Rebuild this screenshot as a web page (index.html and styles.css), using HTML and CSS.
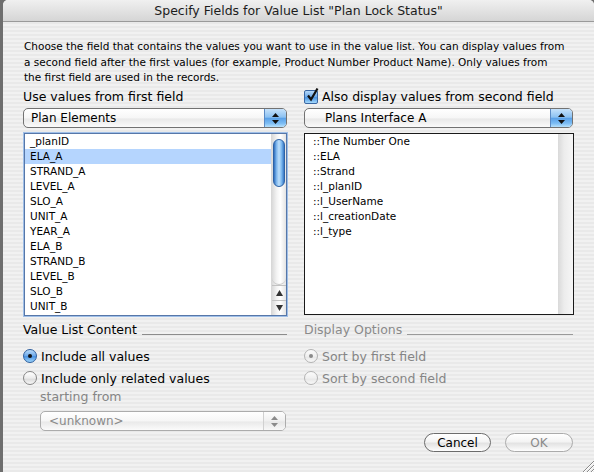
FILE: index.html
```html
<!DOCTYPE html>
<html lang="en">
<head>
    <meta charset="UTF-8">
    <title>Specify Fields for Value List</title>
    <link rel="stylesheet" href="styles.css">
</head>
<body>
<div class="window">
    <div class="titlebar">Specify Fields for Value List "Plan Lock Status"</div>
    <div class="content">
        <p class="intro">Choose the field that contains the values you want to use in the value list. You can display values from<br>a second field after the first values (for example, Product Number Product Name). Only values from<br>the first field are used in the records.</p>

        <div class="columns top">
            <div class="col">
                <div class="label">Use values from first field</div>
                <div class="popup">
                    <span class="popup-text">Plan Elements</span>
                    <span class="popup-arrows"><svg width="7" height="11" viewBox="0 0 7 11"><path d="M3.5 0 L7 4 L0 4 Z M0 7 L7 7 L3.5 11 Z" fill="#111"/></svg></span>
                </div>
                <div class="list focused">
                    <ul class="items">
                        <li>_planID</li>
                        <li class="selected">ELA_A</li>
                        <li>STRAND_A</li>
                        <li>LEVEL_A</li>
                        <li>SLO_A</li>
                        <li>UNIT_A</li>
                        <li>YEAR_A</li>
                        <li>ELA_B</li>
                        <li>STRAND_B</li>
                        <li>LEVEL_B</li>
                        <li>SLO_B</li>
                        <li>UNIT_B</li>
                    </ul>
                    <div class="scrollbar">
                        <div class="track"><div class="thumb"></div></div>
                        <div class="arrow"><svg width="7" height="6" viewBox="0 0 7 6"><path d="M3.5 0 L7 6 L0 6 Z" fill="#333"/></svg></div>
                        <div class="arrow"><svg width="7" height="6" viewBox="0 0 7 6"><path d="M0 0 L7 0 L3.5 6 Z" fill="#333"/></svg></div>
                    </div>
                </div>
            </div>
            <div class="col">
                <div class="label check-label">
                    <span class="checkbox"><svg width="14" height="16" viewBox="0 0 14 16"><path d="M3 8.5 L6 12.5 L12.5 1.5" fill="none" stroke="#111" stroke-width="2.2"/></svg></span>
                    Also display values from second field
                </div>
                <div class="popup">
                    <span class="popup-text indented">Plans Interface A</span>
                    <span class="popup-arrows"><svg width="7" height="11" viewBox="0 0 7 11"><path d="M3.5 0 L7 4 L0 4 Z M0 7 L7 7 L3.5 11 Z" fill="#111"/></svg></span>
                </div>
                <div class="list plain">
                    <ul class="items">
                        <li>::The Number One</li>
                        <li>::ELA</li>
                        <li>::Strand</li>
                        <li>::l_planID</li>
                        <li>::l_UserName</li>
                        <li>::l_creationDate</li>
                        <li>::l_type</li>
                    </ul>
                    <div class="scrollbar empty"></div>
                </div>
            </div>
        </div>

        <div class="columns bottom">
            <div class="col">
                <div class="group-title">Value List Content</div>
                <div class="radio-row"><span class="radio on"></span>Include all values</div>
                <div class="radio-row"><span class="radio"></span>Include only related values</div>
                <div class="sub-label">starting from</div>
                <div class="popup disabled">
                    <span class="popup-text">&lt;unknown&gt;</span>
                    <span class="popup-arrows"><svg width="7" height="11" viewBox="0 0 7 11"><path d="M3.5 0 L7 4 L0 4 Z M0 7 L7 7 L3.5 11 Z" fill="#8a8a8a"/></svg></span>
                </div>
            </div>
            <div class="col">
                <div class="group-title disabled">Display Options</div>
                <div class="radio-row disabled"><span class="radio on"></span>Sort by first field</div>
                <div class="radio-row disabled"><span class="radio"></span>Sort by second field</div>
            </div>
        </div>

        <div class="buttons">
            <button class="button">Cancel</button>
            <button class="button ok" disabled>OK</button>
        </div>
    </div>
    <svg class="grip" width="16" height="14" viewBox="0 0 16 14">
        <path d="M16 3 L5 14 M16 7 L9 14 M16 11 L13 14" stroke="#8a8a8a" stroke-width="1"/>
        <path d="M16 4 L6 14 M16 8 L10 14 M16 12 L14 14" stroke="#fff" stroke-width="1"/>
    </svg>
</div>
</body>
</html>
```

FILE: styles.css
```css
* { box-sizing: border-box; }
body { margin: 0; background: #6e6e6e; font-family: "DejaVu Sans", Verdana, sans-serif; color: #000; }

.window { position: relative; margin-left: 3px; height: 472px; overflow: hidden; border-radius: 5px 5px 0 0; background: repeating-linear-gradient(#f1f1f1 0 2px, #e9e9e9 2px 4px); }
.titlebar { height: 22px; line-height: 21px; text-align: center; font-size: 12.5px; color: #1c1c1c; background: linear-gradient(#f0f0f0, #d5d5d5); border-bottom: 1px solid #9a9a9a; }

.content { padding: 17px 20px 0 20px; }
.intro { margin: 0 0 0 1px; font-size: 10.5px; line-height: 15.5px; white-space: nowrap; }

.columns { display: grid; grid-template-columns: 265px 1fr; column-gap: 16px; }
.columns.top { margin-top: 3.5px; }
.columns.bottom { margin-top: 6px; }
.col { display: flex; flex-direction: column; }

.label { height: 16px; line-height: 16px; font-size: 12.5px; }
.check-label { display: flex; align-items: center; gap: 4px; }
.checkbox { width: 14px; height: 14px; position: relative; border: 1px solid #3a67a3; border-radius: 2px; background: linear-gradient(#b5d8f8, #6aa8ea 50%, #4b94e2 55%, #a6dafc); }
.checkbox svg { position: absolute; left: 0; top: -4px; }

/* popup menus */
.popup { display: flex; height: 20px; margin: 3px 1px 0 0; border: 1px solid #727272; border-radius: 5px; overflow: hidden; font-size: 12px; background: linear-gradient(#ffffff, #f6f6f6 50%, #e9e9e9 55%, #fbfbfb); }
.popup-text { flex: 1; padding-left: 7px; line-height: 18px; }
.popup-text.indented { padding-left: 20px; }
.popup-arrows { width: 22px; display: flex; align-items: center; justify-content: center; border-left: 1px solid #5b8ac4; background: linear-gradient(#c6e2fb, #8dc2f2 45%, #5aa1e8 52%, #7dbdf4 80%, #b9e2fd); }
.popup.disabled { margin: 6px 2px 0 17px; border-color: #acacac; color: #8a8a8a; }
.popup.disabled .popup-text { padding-left: 8px; }
.popup.disabled .popup-arrows { border-left-color: #d0d0d0; background: linear-gradient(#fdfdfd, #f0f0f0 50%, #e6e6e6 55%, #f8f8f8); }

/* lists */
.list { display: flex; margin-top: 5px; background: #fff; overflow: hidden; }
.list.focused { height: 183px; margin-left: 1px; margin-right: 1px; border: 1px solid #5777a8; box-shadow: 0 0 0 1px #9fbfe8; }
.list.plain { height: 182px; border: 1px solid #1a1a1a; }
.items { flex: 1; list-style: none; margin: 0; padding: 0; font-size: 10.5px; }
.items li { height: 15px; line-height: 15px; padding-left: 5px; white-space: nowrap; }
.list.plain .items li { padding-left: 8px; }
.items li.selected { background: #b5d5fe; }

.scrollbar { width: 15px; display: flex; flex-direction: column; background: linear-gradient(to right, #dadada, #f4f4f4 35%, #ffffff 60%, #e4e4e4); border-left: 1px solid #d8d8d8; }
.scrollbar.empty { border-left: none; background: linear-gradient(to right, #d9d9d9, #ececec 40%, #f6f6f6); }
.track { flex: 1; padding: 5px 1px 0 1px; border-bottom: 1px solid #c8c8c8; border-radius: 0 0 7px 7px; }
.thumb { height: 48px; border: 1px solid #2d62a6; border-radius: 6px; background: linear-gradient(to right, #2f6fbe, #7fb6ec 25%, #bfe0fb 50%, #7cb8ef 75%, #3777c5); }
.arrow { height: 15px; display: flex; align-items: center; justify-content: center; border-top: 1px solid #c2c2c2; }

/* groups and radios */
.group-title { display: flex; align-items: center; height: 16px; line-height: 16px; font-size: 12.5px; margin-right: 1px; }
.group-title::after { content: ""; flex: 1; height: 1px; margin: 8px 0 0 5px; background: #8c8c8c; }
.group-title.disabled { color: #8a8a8a; }
.group-title.disabled::after { background: #9a9a9a; }

.radio-row { display: flex; align-items: center; gap: 4px; height: 22px; font-size: 12.5px; }
.group-title + .radio-row { margin-top: 7px; }
.radio { width: 14px; height: 14px; border-radius: 50%; display: flex; align-items: center; justify-content: center; border: 1px solid #858585; background: linear-gradient(#ffffff, #ececec 50%, #dcdcdc 60%, #f7f7f7); }
.radio.on { border-color: #2d5e9e; background: linear-gradient(#b9dbf9, #6eaaea 48%, #4b93e2 55%, #9ed5fb); }
.radio.on::after { content: ""; width: 4px; height: 4px; border-radius: 50%; background: #111; }
.radio-row.disabled { color: #858585; }
.radio-row.disabled .radio { border-color: #b3b3b3; background: linear-gradient(#fbfbfb, #f0f0f0 50%, #e8e8e8 60%, #f8f8f8); }
.radio-row.disabled .radio.on::after { background: #8a8a8a; }

.sub-label { height: 16px; line-height: 16px; padding-left: 17px; font-size: 12.5px; color: #858585; }

/* buttons */
.buttons { display: flex; justify-content: flex-end; gap: 14px; margin: 2px 1px 0 0; }
.button { width: 67px; height: 19px; padding: 0; border: 1px solid #6c6c6c; border-radius: 10px; font-family: inherit; font-size: 12px; color: #000; background: linear-gradient(#ffffff, #f4f4f4 45%, #e3e3e3 55%, #fdfdfd); }
.button.ok { width: 68px; border-color: #ababab; color: #8a8a8a; }

.grip { position: absolute; right: 0; bottom: 0; }
```
